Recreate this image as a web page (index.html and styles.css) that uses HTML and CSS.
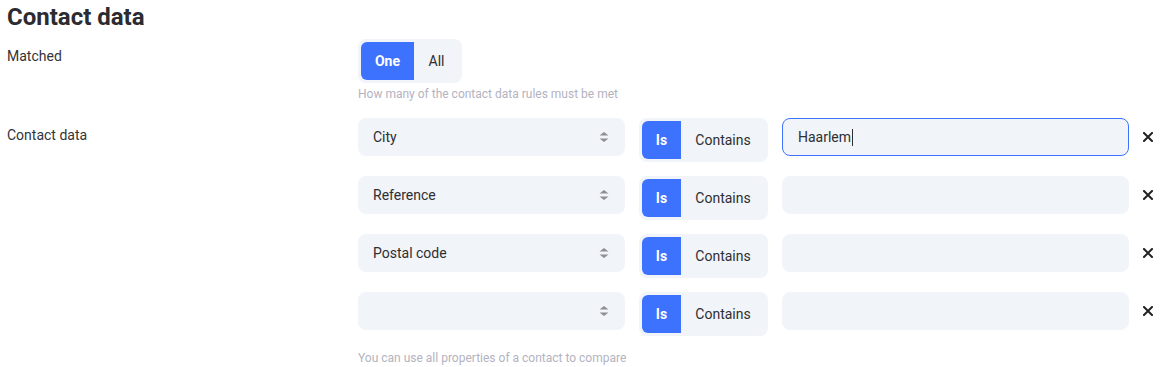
FILE: index.html
```html
<!DOCTYPE html>
<html lang="en">

<head>
    <meta charset="UTF-8">
    <meta name="viewport" content="width=device-width, initial-scale=1.0">
    <title>Contact data</title>
    <link rel="stylesheet" href="styles.css">
</head>

<body>
    <div class="section">
        <h2 class="section-title">Contact data</h2>

        <!-- Matched -->
        <div class="field">
            <div class="field-label">Matched</div>
            <div class="field-body">
                <div class="segmented">
                    <div class="segment segment-active">One</div>
                    <div class="segment segment-all">All</div>
                </div>
                <div class="help">How many of the contact data rules must be met</div>
            </div>
        </div>

        <!-- Contact data rules -->
        <div class="field field-rules">
            <div class="field-label">Contact data</div>
            <div class="field-body">
                <div class="rules">
                    <div class="rule">
                        <div class="select">
                            <span class="select-value">City</span>
                            <svg class="select-arrows" width="10" height="10" viewBox="0 0 10 10"><path d="M5 0L9.5 3.6H0.5Z M5 10L9.5 6.4H0.5Z" fill="#8f8f93"/></svg>
                        </div>
                        <div class="segmented">
                            <div class="segment segment-active segment-is">Is</div>
                            <div class="segment segment-contains">Contains</div>
                        </div>
                        <div class="text-input text-input-focus">Haarlem<span class="caret"></span></div>
                        <button class="remove" aria-label="Remove">
                            <svg width="10" height="10" viewBox="0 0 10 10"><path d="M1 1L9 9M9 1L1 9" stroke="#222" stroke-width="2" stroke-linecap="square"/></svg>
                        </button>
                    </div>

                    <div class="rule">
                        <div class="select">
                            <span class="select-value">Reference</span>
                            <svg class="select-arrows" width="10" height="10" viewBox="0 0 10 10"><path d="M5 0L9.5 3.6H0.5Z M5 10L9.5 6.4H0.5Z" fill="#8f8f93"/></svg>
                        </div>
                        <div class="segmented">
                            <div class="segment segment-active segment-is">Is</div>
                            <div class="segment segment-contains">Contains</div>
                        </div>
                        <div class="text-input"></div>
                        <button class="remove" aria-label="Remove">
                            <svg width="10" height="10" viewBox="0 0 10 10"><path d="M1 1L9 9M9 1L1 9" stroke="#222" stroke-width="2" stroke-linecap="square"/></svg>
                        </button>
                    </div>

                    <div class="rule">
                        <div class="select">
                            <span class="select-value">Postal code</span>
                            <svg class="select-arrows" width="10" height="10" viewBox="0 0 10 10"><path d="M5 0L9.5 3.6H0.5Z M5 10L9.5 6.4H0.5Z" fill="#8f8f93"/></svg>
                        </div>
                        <div class="segmented">
                            <div class="segment segment-active segment-is">Is</div>
                            <div class="segment segment-contains">Contains</div>
                        </div>
                        <div class="text-input"></div>
                        <button class="remove" aria-label="Remove">
                            <svg width="10" height="10" viewBox="0 0 10 10"><path d="M1 1L9 9M9 1L1 9" stroke="#222" stroke-width="2" stroke-linecap="square"/></svg>
                        </button>
                    </div>

                    <div class="rule">
                        <div class="select">
                            <span class="select-value"></span>
                            <svg class="select-arrows" width="10" height="10" viewBox="0 0 10 10"><path d="M5 0L9.5 3.6H0.5Z M5 10L9.5 6.4H0.5Z" fill="#8f8f93"/></svg>
                        </div>
                        <div class="segmented">
                            <div class="segment segment-active segment-is">Is</div>
                            <div class="segment segment-contains">Contains</div>
                        </div>
                        <div class="text-input"></div>
                        <button class="remove" aria-label="Remove">
                            <svg width="10" height="10" viewBox="0 0 10 10"><path d="M1 1L9 9M9 1L1 9" stroke="#222" stroke-width="2" stroke-linecap="square"/></svg>
                        </button>
                    </div>
                </div>
                <div class="help help-bottom">You can use all properties of a contact to compare</div>
            </div>
        </div>
    </div>
</body>

</html>
```

FILE: styles.css
```css
/* Page */
body {
    margin: 0;
    padding: 3px 0 0 7px;
    background: #FFFFFF;
    color: #2E2E33;
    font-family: 'Roboto', 'Liberation Sans', sans-serif;
    font-size: 14px;
}

.section-title {
    margin: 0 0 8px;
    font-size: 24px;
    line-height: 28px;
    font-weight: 700;
    color: #2B2B30;
}

/* Label column + control column */
.field {
    display: grid;
    grid-template-columns: 351px 1fr;
}

.field-rules {
    margin-top: 16px;
}

.field-label {
    padding-top: 7px;
    line-height: 20px;
    color: #333338;
}

.help {
    margin-top: 3px;
    font-size: 12px;
    line-height: 16px;
    color: #B3B3BF;
}

.help-bottom {
    margin-top: 14px;
}

/* Segmented toggle */
.segmented {
    display: inline-flex;
    padding: 3px;
    background: #F1F4F8;
    border-radius: 8px;
    height: 38px;
}

.segment {
    display: flex;
    align-items: center;
    justify-content: center;
    line-height: 20px;
    color: #2E2E33;
}

.segment-active {
    width: 53px;
    background: #3D72FE;
    color: #FFFFFF;
    font-weight: 700;
    border-radius: 6px 0 0 6px;
}

.segment-all {
    width: 45px;
}

.segment-is {
    width: 39px;
}

.segment-contains {
    width: 84px;
}

/* Rule rows */
.rules {
    display: flex;
    flex-direction: column;
    gap: 14px;
}

.rule {
    display: flex;
    align-items: flex-start;
    gap: 14px;
}

.select {
    display: flex;
    align-items: center;
    justify-content: space-between;
    box-sizing: border-box;
    width: 267px;
    height: 38px;
    padding: 0 16px 0 15px;
    background: #F1F4F8;
    border-radius: 8px;
    color: #2E2E33;
}

.select-arrows {
    flex-shrink: 0;
}

.text-input {
    display: flex;
    align-items: center;
    box-sizing: border-box;
    width: 347px;
    height: 38px;
    padding: 0 15px;
    background: #F1F4F8;
    border: 1px solid #F1F4F8;
    border-radius: 8px;
    color: #2E2E33;
}

.text-input-focus {
    border-color: #3D72FE;
}

.caret {
    display: inline-block;
    width: 1px;
    height: 17px;
    margin-left: 1px;
    background: #2E2E33;
}

.remove {
    display: flex;
    align-items: center;
    justify-content: center;
    width: 10px;
    height: 38px;
    padding: 0;
    border: none;
    background: none;
    cursor: pointer;
}
```
